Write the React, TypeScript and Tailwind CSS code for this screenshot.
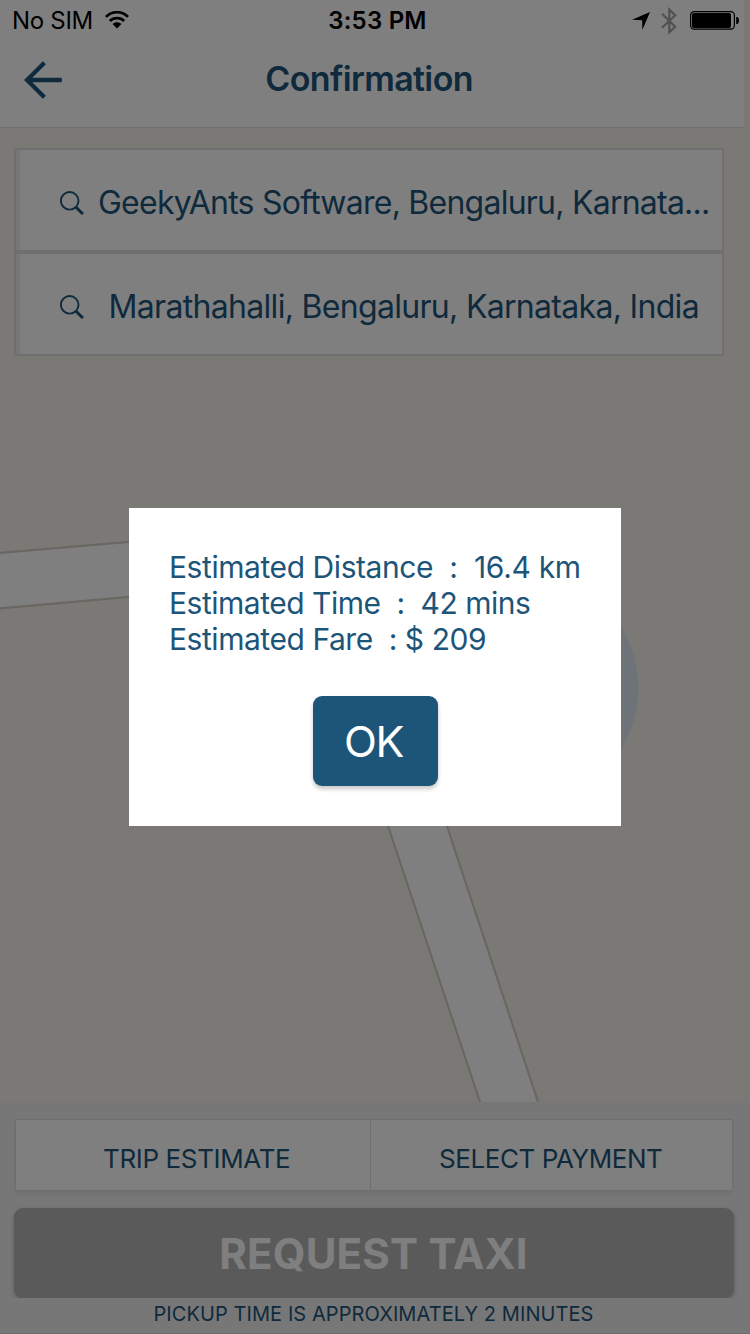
import React from "react";

function WifiIcon() {
  return (
    <svg width="24" height="18" viewBox="0 0 24 18" fill="none" stroke="#000">
      <path d="M0.9 5.9C7 -0.3 17 -0.3 23.1 5.9" strokeWidth="2.7" />
      <path d="M4.9 10C8.8 6.2 15.2 6.2 19.1 10" strokeWidth="2.7" />
      <path d="M7.6 13C10 10.6 14 10.6 16.4 13L12 17.6Z" fill="#000" stroke="none" />
    </svg>
  );
}

function LocationIcon() {
  return (
    <svg width="18" height="18" viewBox="0 0 18 18">
      <path d="M18 0L10.3 18L10.2 8.2L0 7.8Z" fill="#000" />
    </svg>
  );
}

function BluetoothIcon() {
  return (
    <svg width="16" height="28" viewBox="0 0 16 28" fill="none" stroke="#a2a2a2" strokeWidth="2.2">
      <path d="M1 6.8L14.2 19.8L8.3 25.2V2.6L14.2 8.2L1 20.8" />
    </svg>
  );
}

function BatteryIcon() {
  return (
    <svg width="49" height="19" viewBox="0 0 49 19">
      <rect x="0.6" y="0.6" width="43.8" height="17.6" rx="3.6" fill="none" stroke="#000" strokeWidth="1.2" />
      <rect x="2" y="2" width="39" height="15" rx="2" fill="#000" />
      <path d="M46.2 6H47.3Q49 6.6 49 9.4T47.3 13H46.2Z" fill="#000" />
    </svg>
  );
}

function BackIcon() {
  return (
    <svg width="38" height="38" viewBox="0 0 38 38" fill="none" stroke="#1d5579" strokeWidth="4.3">
      <path d="M20.4 1.8L3 19L20.4 36.2M3 19H37.8" />
    </svg>
  );
}

function SearchIcon() {
  return (
    <svg className="shrink-0" width="24" height="24" viewBox="0 0 24 24" fill="none" stroke="#1d5579">
      <circle cx="9.7" cy="9.8" r="8.8" strokeWidth="1.9" />
      <path d="M15.8 16.2L17 17.4" strokeWidth="2" />
      <path d="M16.4 16.6L22.9 23" strokeWidth="3" />
    </svg>
  );
}

function MapView() {
  return (
    <svg className="absolute inset-0" width="750" height="1334" viewBox="0 0 750 1334">
      <rect width="750" height="1334" fill="#f7f3eb" />
      <circle cx="524.5" cy="688" r="114" fill="#dae6f0" />
      <g fill="#ffffff" stroke="#d5cdc4" strokeWidth="2.2">
        <path d="M-4 553.3L240 532.5V587L-4 608.8Z" />
        <path d="M354.7 726L489.3 1130H547.3L414 726Z" />
      </g>
    </svg>
  );
}

function Header() {
  return (
    <header className="h-32 w-[744px] border-b border-[#dcdcde] bg-white">
      <div className="flex h-10 items-center pl-3 pr-[5px] text-2xl text-black">
        <div className="flex w-[315px] items-center">
          <span className="w-[93px] whitespace-nowrap pt-0.5 leading-10 tracking-[-0.31px]">No SIM</span>
          <WifiIcon />
        </div>
        <span className="w-[105px] whitespace-nowrap pl-[1.3px] pt-0.5 font-semibold leading-10 tracking-[0.2px]">
          3:53 PM
        </span>
        <div className="flex flex-1 items-center justify-end">
          <span className="mt-px">
            <LocationIcon />
          </span>
          <span className="ml-[11px] mr-[13px] mt-px">
            <BluetoothIcon />
          </span>
          <span className="mt-px">
            <BatteryIcon />
          </span>
        </div>
      </div>
      <div className="flex h-[78px] items-center pl-6">
        <span className="mt-0.5">
          <BackIcon />
        </span>
        <h1 className="ml-[203.3px] text-[34px] font-semibold leading-10 tracking-[-0.64px]">Confirmation</h1>
      </div>
    </header>
  );
}

function Dialog() {
  return (
    <div className="flex h-[318px] w-[492px] flex-col bg-white pl-10 pt-[41px]">
      <div className="whitespace-pre text-[30px] leading-9">
        <p>
          <span className="tracking-[-0.43px]">Estimated Distance</span>
          <span className="tracking-[-0.3px]">{"  :  16.4 km"}</span>
        </p>
        <p className="tracking-[-0.48px]">{"Estimated Time  :  42 mins"}</p>
        <p className="tracking-[-0.45px]">{"Estimated Fare  : $ 209"}</p>
      </div>
      <button className="ml-36 mt-[39px] h-[90px] w-[125px] rounded-[9px] bg-[#1d5579] pr-1 text-[43px] leading-[91px] tracking-[-1.5px] text-white shadow-[0_3px_4px_rgba(0,0,0,0.22)]">
        OK
      </button>
    </div>
  );
}

export default function App() {
  return (
    <div className="relative flex h-[1334px] w-[750px] flex-col overflow-hidden font-['Inter','Liberation_Sans',sans-serif] text-[#1d5579]">
      <MapView />
      <div className="relative flex flex-1 flex-col">
        <Header />
        <div className="ml-3.5 mt-5 w-[710px] text-[32px]">
          <div className="flex h-[104px] items-center border-2 border-[#dedee0] bg-white">
            <span className="h-full w-1 bg-[#eeeeef]" />
            <span className="ml-10 mt-1.5">
              <SearchIcon />
            </span>
            <span className="ml-[14px] mt-[5px] whitespace-nowrap leading-10 tracking-[-0.76px]">
              GeekyAnts Software, Bengaluru, Karnata...
            </span>
          </div>
          <div className="flex h-[104px] items-center border-2 border-[#dedee0] bg-white">
            <span className="h-full w-1 bg-[#eeeeef]" />
            <span className="ml-10 mt-1.5">
              <SearchIcon />
            </span>
            <span className="ml-[24.6px] mt-[5px] whitespace-nowrap leading-10 tracking-[-0.69px]">
              Marathahalli, Bengaluru, Karnataka, India
            </span>
          </div>
        </div>
      </div>
      <footer className="relative h-[232px] border-b border-[#dcdcde] bg-[#eeeeee] pt-[17px]">
        <div className="ml-[15px] flex h-[72px] w-[718px] border border-[#dcdcdc] bg-white text-[26px] leading-[78px] shadow-[0_3px_4px_rgba(0,0,0,0.06)]">
          <div className="w-[355px] border-r border-[#dcdcdc] pl-[87px] tracking-[-0.37px]">TRIP ESTIMATE</div>
          <div className="pl-[68px] tracking-[-0.44px]">SELECT PAYMENT</div>
        </div>
        <div className="mt-[11px] h-[96px] overflow-hidden px-3.5 pt-1.5">
          <button className="block h-[90px] w-[720px] rounded-[9px] bg-[#b5b5b5] pr-px text-[42px] font-bold leading-[92px] tracking-[0.2px] text-white shadow-[0_2px_4px_rgba(0,0,0,0.25)]">
            REQUEST TAXI
          </button>
        </div>
        <p className="pr-[3px] pt-0.5 text-center text-xl leading-7 tracking-[0.08px]">
          PICKUP TIME IS APPROXIMATELY 2 MINUTES
        </p>
      </footer>
      <div className="absolute inset-0 flex items-center justify-center bg-black/50">
        <Dialog />
      </div>
    </div>
  );
}
